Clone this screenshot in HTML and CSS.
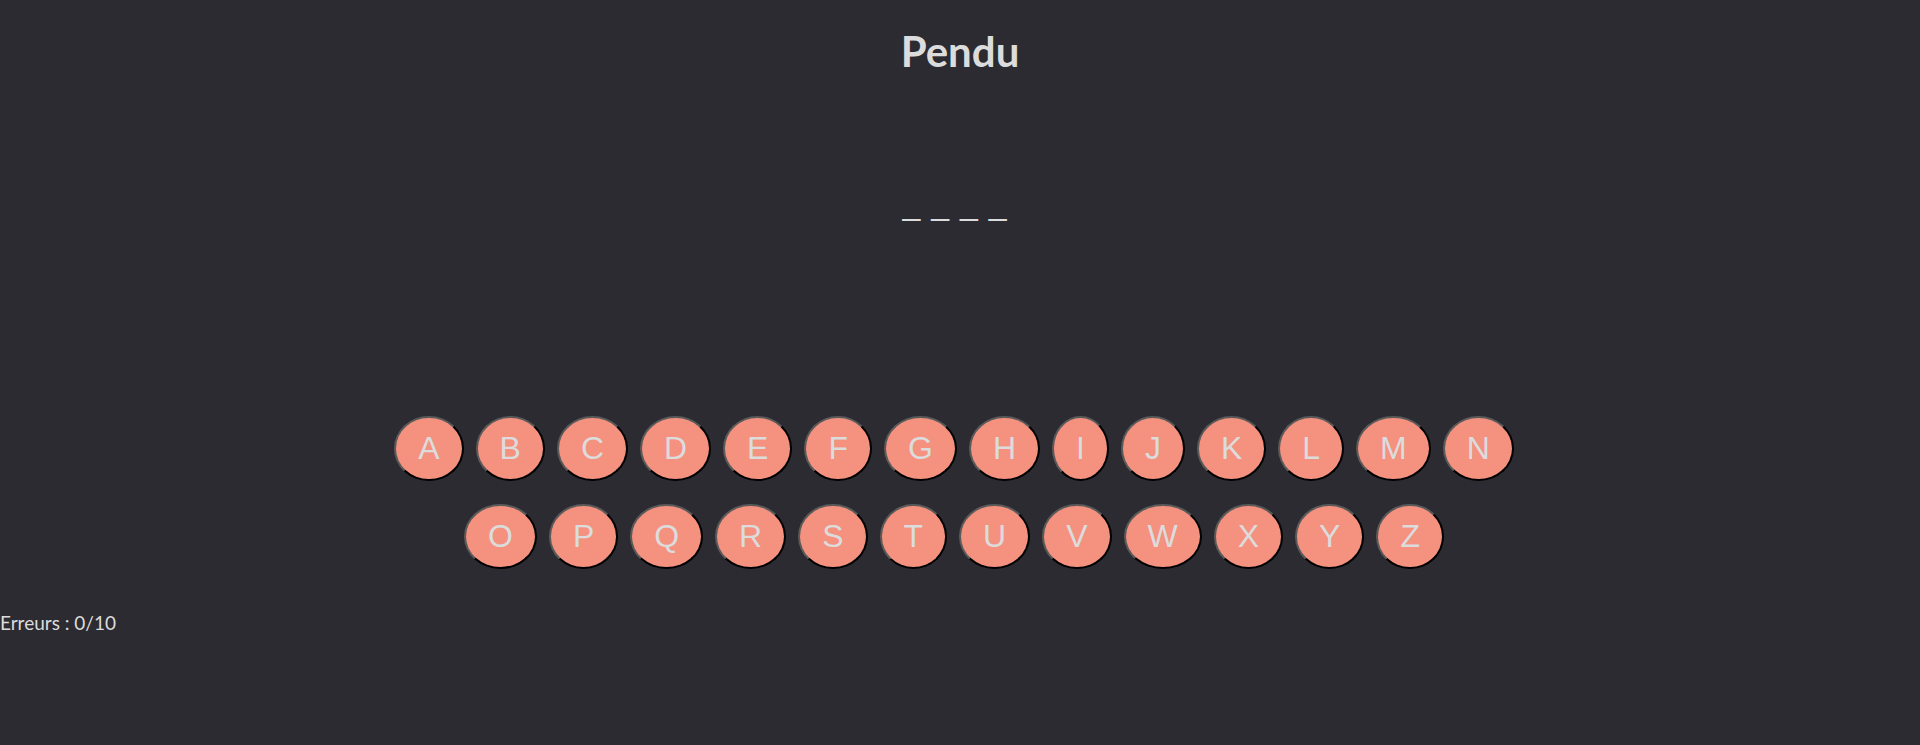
FILE: index.html
```html
<!DOCTYPE html>
<html lang="fr">
<head>
<meta charset="utf-8">
<title>Pendu</title>
<link rel="stylesheet" href="styles.css">
</head>
<body>
<h1 class="title">Pendu</h1>
<div class="word">
  <span class="slot">_</span><span class="slot">_</span><span class="slot">_</span><span class="slot">_</span>
</div>
<div class="keyboard">
  <div class="key-row">
    <button class="key">A</button><button class="key">B</button><button class="key">C</button><button class="key">D</button><button class="key">E</button><button class="key">F</button><button class="key">G</button><button class="key">H</button><button class="key">I</button><button class="key">J</button><button class="key">K</button><button class="key">L</button><button class="key">M</button><button class="key">N</button>
  </div>
  <div class="key-row">
    <button class="key">O</button><button class="key">P</button><button class="key">Q</button><button class="key">R</button><button class="key">S</button><button class="key">T</button><button class="key">U</button><button class="key">V</button><button class="key">W</button><button class="key">X</button><button class="key">Y</button><button class="key">Z</button>
  </div>
</div>
<p class="errors">Erreurs : 0/10</p>
</body>
</html>
```
FILE: styles.css
```css
html, body {
  margin: 0;
  padding: 0;
  background: #2c2b31;
  color: #dcdcdc;
  font-family: Lato, "Noto Sans", sans-serif;
}

.title {
  margin: 0;
  padding-top: 27px;
  font-size: 42px;
  line-height: 48px;
  font-weight: 700;
  text-align: center;
}

.word {
  margin-top: 111px;
  display: flex;
  justify-content: center;
  font-family: "Liberation Sans", Arial, sans-serif;
  font-size: 32px;
  line-height: 37px;
}

.slot {
  margin-right: 11px;
}

.keyboard {
  margin-top: 193px;
  display: flex;
  flex-direction: column;
  gap: 23px;
}

.key-row {
  display: flex;
  justify-content: center;
}

.key {
  margin: 0 12px 0 0;
  padding: 12px 22px;
  font-family: "Liberation Sans", Arial, sans-serif;
  font-size: 32px;
  line-height: 37px;
  color: #dcdcdc;
  background: #f5917f;
  border: 2px solid;
  border-color: #5a5a5a #000 #000 #5a5a5a;
  border-radius: 50%;
  cursor: pointer;
}

.errors {
  margin: 42px 0 0;
  font-size: 19px;
  line-height: 24px;
}
```
